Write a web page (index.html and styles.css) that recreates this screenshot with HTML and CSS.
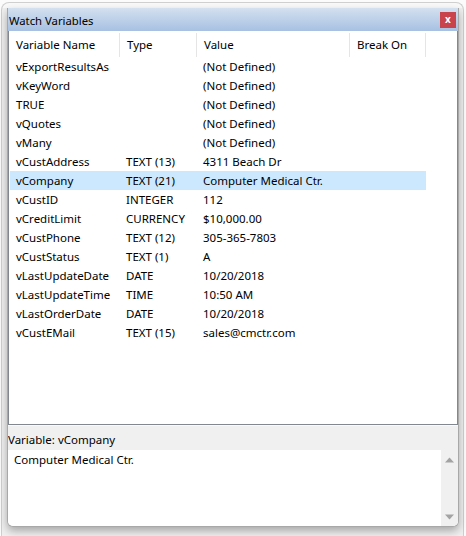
FILE: index.html
```html
<!DOCTYPE html>
<html>
<head>
<meta charset="utf-8">
<link rel="stylesheet" href="styles.css">
</head>
<body>
<div class="frame">
  <div class="panel">
    <div class="titlebar">
      <span class="title">Watch Variables</span>
      <span class="close">x</span>
    </div>
    <div class="list">
      <div class="row head">
        <div class="c c1">Variable Name</div>
        <div class="c c2">Type</div>
        <div class="c c3">Value</div>
        <div class="c c4">Break On</div>
      </div>
      <div class="row"><div class="c c1">vExportResultsAs</div><div class="c c2"></div><div class="c c3">(Not Defined)</div><div class="c c4"></div></div>
      <div class="row"><div class="c c1">vKeyWord</div><div class="c c2"></div><div class="c c3">(Not Defined)</div><div class="c c4"></div></div>
      <div class="row"><div class="c c1">TRUE</div><div class="c c2"></div><div class="c c3">(Not Defined)</div><div class="c c4"></div></div>
      <div class="row"><div class="c c1">vQuotes</div><div class="c c2"></div><div class="c c3">(Not Defined)</div><div class="c c4"></div></div>
      <div class="row"><div class="c c1">vMany</div><div class="c c2"></div><div class="c c3">(Not Defined)</div><div class="c c4"></div></div>
      <div class="row"><div class="c c1">vCustAddress</div><div class="c c2">TEXT (13)</div><div class="c c3">4311 Beach Dr</div><div class="c c4"></div></div>
      <div class="row selected"><div class="c c1">vCompany</div><div class="c c2">TEXT (21)</div><div class="c c3">Computer Medical Ctr.</div><div class="c c4"></div></div>
      <div class="row"><div class="c c1">vCustID</div><div class="c c2">INTEGER</div><div class="c c3">112</div><div class="c c4"></div></div>
      <div class="row"><div class="c c1">vCreditLimit</div><div class="c c2">CURRENCY</div><div class="c c3">$10,000.00</div><div class="c c4"></div></div>
      <div class="row"><div class="c c1">vCustPhone</div><div class="c c2">TEXT (12)</div><div class="c c3">305-365-7803</div><div class="c c4"></div></div>
      <div class="row"><div class="c c1">vCustStatus</div><div class="c c2">TEXT (1)</div><div class="c c3">A</div><div class="c c4"></div></div>
      <div class="row"><div class="c c1">vLastUpdateDate</div><div class="c c2">DATE</div><div class="c c3">10/20/2018</div><div class="c c4"></div></div>
      <div class="row"><div class="c c1">vLastUpdateTime</div><div class="c c2">TIME</div><div class="c c3">10:50 AM</div><div class="c c4"></div></div>
      <div class="row"><div class="c c1">vLastOrderDate</div><div class="c c2">DATE</div><div class="c c3">10/20/2018</div><div class="c c4"></div></div>
      <div class="row"><div class="c c1">vCustEMail</div><div class="c c2">TEXT (15)</div><div class="c c3">sales@cmctr.com</div><div class="c c4"></div></div>
    </div>
    <div class="varlabel">Variable: vCompany</div>
    <div class="detail">
      <div class="detail-text">Computer Medical Ctr.</div>
      <div class="vscroll">
        <svg width="9" height="6" viewBox="0 0 9 6"><path d="M0 5.5 L4.5 0.5 L9 5.5 Z" fill="#a3a3a3"/></svg>
        <svg width="9" height="6" viewBox="0 0 9 6"><path d="M0 0.5 L4.5 5.5 L9 0.5 Z" fill="#a3a3a3"/></svg>
      </div>
    </div>
  </div>
</div>
</body>
</html>
```

FILE: styles.css
```css
html, body {
  margin: 0;
  padding: 0;
}
body {
  width: 466px;
  height: 536px;
  overflow: hidden;
  background: #fbfbfb;
  font-family: "Segoe UI", "Noto Sans", sans-serif;
  font-size: 11.5px;
  color: #000;
}
.frame {
  box-sizing: border-box;
  margin: 2px 2px 0 1px;
  width: 463px;
  height: 540px;
  border: 1px solid #cfcfcf;
  border-bottom: none;
  border-radius: 8px 8px 0 0;
  background: linear-gradient(#f9f9f9 0, #f9f9f9 5px, #f0f0f0 5px);
  padding: 5px 4px 0 5px;
}
.panel {
  width: 452px;
  box-sizing: border-box;
  border: 1px solid #a8a8a8;
  border-top: none;
  border-radius: 0 0 6px 6px;
  background: #f0f0f0;
  box-shadow: 0 4px 8px rgba(0, 0, 0, 0.3);
  overflow: hidden;
}
.titlebar {
  height: 23px;
  display: flex;
  align-items: center;
  justify-content: space-between;
  background: linear-gradient(#d3e0ef, #a7c1e2);
  padding: 0 2px 0 1px;
}
.title {
  font-size: 11.3px;
  padding-top: 1px;
}
.close {
  width: 16px;
  height: 16px;
  background: #c8434b;
  color: #fff;
  font-size: 10px;
  font-weight: bold;
  line-height: 14px;
  text-align: center;
}
.list {
  height: 393px;
  background: #fff;
  border-left: 1px solid #828790;
  border-right: 1px solid #828790;
  border-bottom: 1px solid #828790;
  padding-left: 1px;
}
.row {
  display: flex;
  height: 19px;
  line-height: 19px;
  width: 416px;
}
.row.head {
  height: 26px;
  line-height: 24px;
  padding-top: 2px;
  box-sizing: border-box;
}
.row.selected {
  background: #cce8ff;
}
.c {
  box-sizing: border-box;
  padding-left: 6px;
  white-space: nowrap;
  overflow: hidden;
}
.c1 { width: 110px; }
.c2 { width: 77px; }
.c3 { width: 153px; }
.c4 { width: 76px; }
.head .c {
  border-right: 1px solid #e5e5e5;
  padding-left: 7px;
}
.head .c1 { padding-left: 6px; }
.varlabel {
  height: 25px;
  box-sizing: border-box;
  padding-top: 3px;
  line-height: 22px;
  border-top: 1px solid #fafafa;
}
.detail {
  display: flex;
  height: 76px;
  background: #fff;
}
.detail-text {
  flex: 1;
  padding: 1px 0 0 6px;
  line-height: 18px;
}
.vscroll {
  width: 17px;
  background: #f0f0f0;
  display: flex;
  flex-direction: column;
  justify-content: space-between;
  align-items: center;
  padding: 7px 0 6px;
  box-sizing: border-box;
}
.vscroll svg {
  display: block;
}
```
